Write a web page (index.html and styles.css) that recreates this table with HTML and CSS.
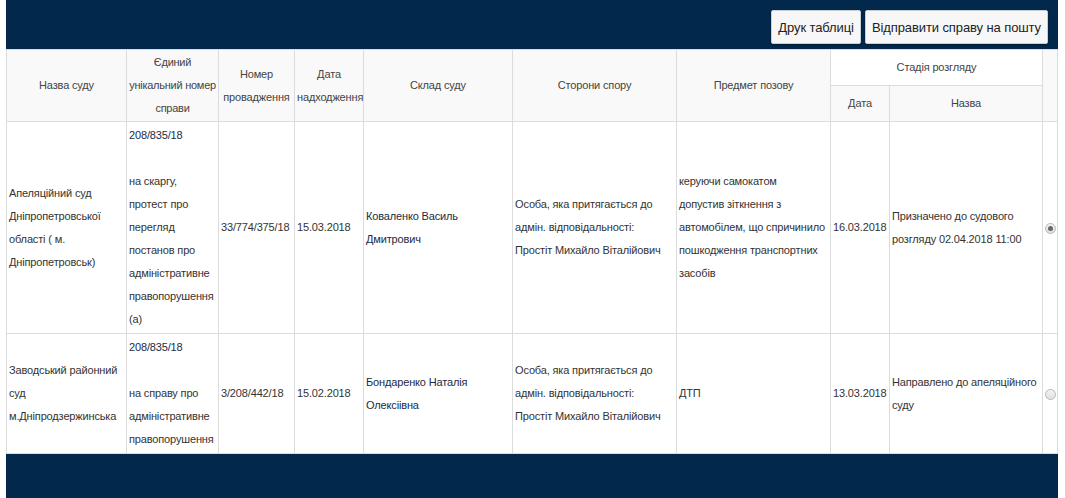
FILE: index.html
```html
<!DOCTYPE html>
<html lang="uk">
<head>
<meta charset="utf-8">
<title>Стан розгляду справ</title>
<link rel="stylesheet" href="styles.css">
</head>
<body>
<div class="page">
  <div class="topbar">
    <button class="btn">Друк таблиці</button>
    <button class="btn">Відправити справу на пошту</button>
  </div>
  <table class="cases">
    <colgroup>
      <col style="width:120px">
      <col style="width:92px">
      <col style="width:76px">
      <col style="width:69px">
      <col style="width:149px">
      <col style="width:164px">
      <col style="width:154px">
      <col style="width:59px">
      <col style="width:153px">
      <col style="width:15px">
    </colgroup>
    <thead>
      <tr>
        <th rowspan="2">Назва суду</th>
        <th rowspan="2" class="tight">Єдиний<br><span class="nw">унікальний номер</span><br>справи</th>
        <th rowspan="2">Номер провадження</th>
        <th rowspan="2">Дата надходження</th>
        <th rowspan="2">Склад суду</th>
        <th rowspan="2">Сторони спору</th>
        <th rowspan="2">Предмет позову</th>
        <th colspan="2" class="stage">Стадія розгляду</th>
        <th rowspan="2"></th>
      </tr>
      <tr>
        <th class="sub">Дата</th>
        <th class="sub">Назва</th>
      </tr>
    </thead>
    <tbody>
      <tr>
        <td>Апеляційний суд Дніпропетровської області ( м. Дніпропетровськ)</td>
        <td><span class="num">208/835/18</span><br><br>на скаргу, протест про перегляд постанов про адміністративне правопорушення (а)</td>
        <td>33/774/375/18</td>
        <td>15.03.2018</td>
        <td class="judge">Коваленко Василь Дмитрович</td>
        <td>Особа, яка притягається до адмін. відповідальності: Простіт Михайло Віталійович</td>
        <td>керуючи самокатом<br>допустив зіткнення з<br><span class="nw">автомобілем, що спричинило</span><br>пошкодження транспортних<br>засобів</td>
        <td>16.03.2018</td>
        <td>Призначено до судового розгляду 02.04.2018 11:00</td>
        <td class="radio"><span class="rb checked"></span></td>
      </tr>
      <tr>
        <td>Заводський районний суд м.Дніпродзержинська</td>
        <td><span class="num">208/835/18</span><br><br>на справу про адміністративне правопорушення</td>
        <td>3/208/442/18</td>
        <td>15.02.2018</td>
        <td class="judge">Бондаренко Наталія Олексіівна</td>
        <td>Особа, яка притягається до адмін. відповідальності: Простіт Михайло Віталійович</td>
        <td>ДТП</td>
        <td>13.03.2018</td>
        <td>Направлено до апеляційного суду</td>
        <td class="radio"><span class="rb"></span></td>
      </tr>
    </tbody>
  </table>
  <div class="bottombar"></div>
</div>
</body>
</html>
```

FILE: styles.css
```css
html, body {
  margin: 0;
  padding: 0;
  background: #ffffff;
}
body {
  font-family: "Liberation Sans", Arial, Helvetica, sans-serif;
  color: #333;
}
.page {
  margin: 0 7px 0 6px;
}
.topbar {
  background: #02284c;
  height: 49px;
  display: flex;
  justify-content: flex-end;
  align-items: flex-start;
  gap: 4px;
  padding: 10px 10px 0 0;
  box-sizing: border-box;
}
.btn {
  font-family: "Liberation Sans", Arial, sans-serif;
  font-size: 13px;
  color: #222;
  background: #f7f7f7;
  border: 1px solid #c9ced4;
  border-radius: 2px;
  height: 34px;
  padding: 0 6px;
  box-shadow: 0 1px 2px rgba(0,0,0,0.3);
  letter-spacing: -0.1px;
}
.cases {
  border-collapse: collapse;
  table-layout: fixed;
  width: 1052px;
  font-size: 11px;
  line-height: 23px;
  letter-spacing: -0.15px;
}
.cases th, .cases td {
  border: 1px solid #dcdcdc;
  vertical-align: middle;
}
.cases th {
  padding: 1px 2px;
  font-weight: normal;
  text-align: center;
  background: #f9f9f9;
  color: #444;
}
.cases td {
  padding: 2px 2px;
  color: #333;
}
.cases th.tight {
  padding: 1px 0;
  letter-spacing: -0.25px;
}
.nw {
  white-space: nowrap;
}
.cases th.stage {
  background: #fff;
}
.cases td.judge, .num {
  color: #1b2a44;
}
.cases td.radio {
  text-align: center;
  padding: 0;
}
.rb {
  display: inline-block;
  width: 9px;
  height: 9px;
  border: 1px solid #b9b9b9;
  border-radius: 50%;
  background: linear-gradient(#f4f4f4, #dedede);
  vertical-align: middle;
  position: relative;
}
.rb.checked::after {
  content: "";
  position: absolute;
  left: 2px;
  top: 2px;
  width: 5px;
  height: 5px;
  border-radius: 50%;
  background: #666;
}
.bottombar {
  background: #02284c;
  height: 60px;
}
```
